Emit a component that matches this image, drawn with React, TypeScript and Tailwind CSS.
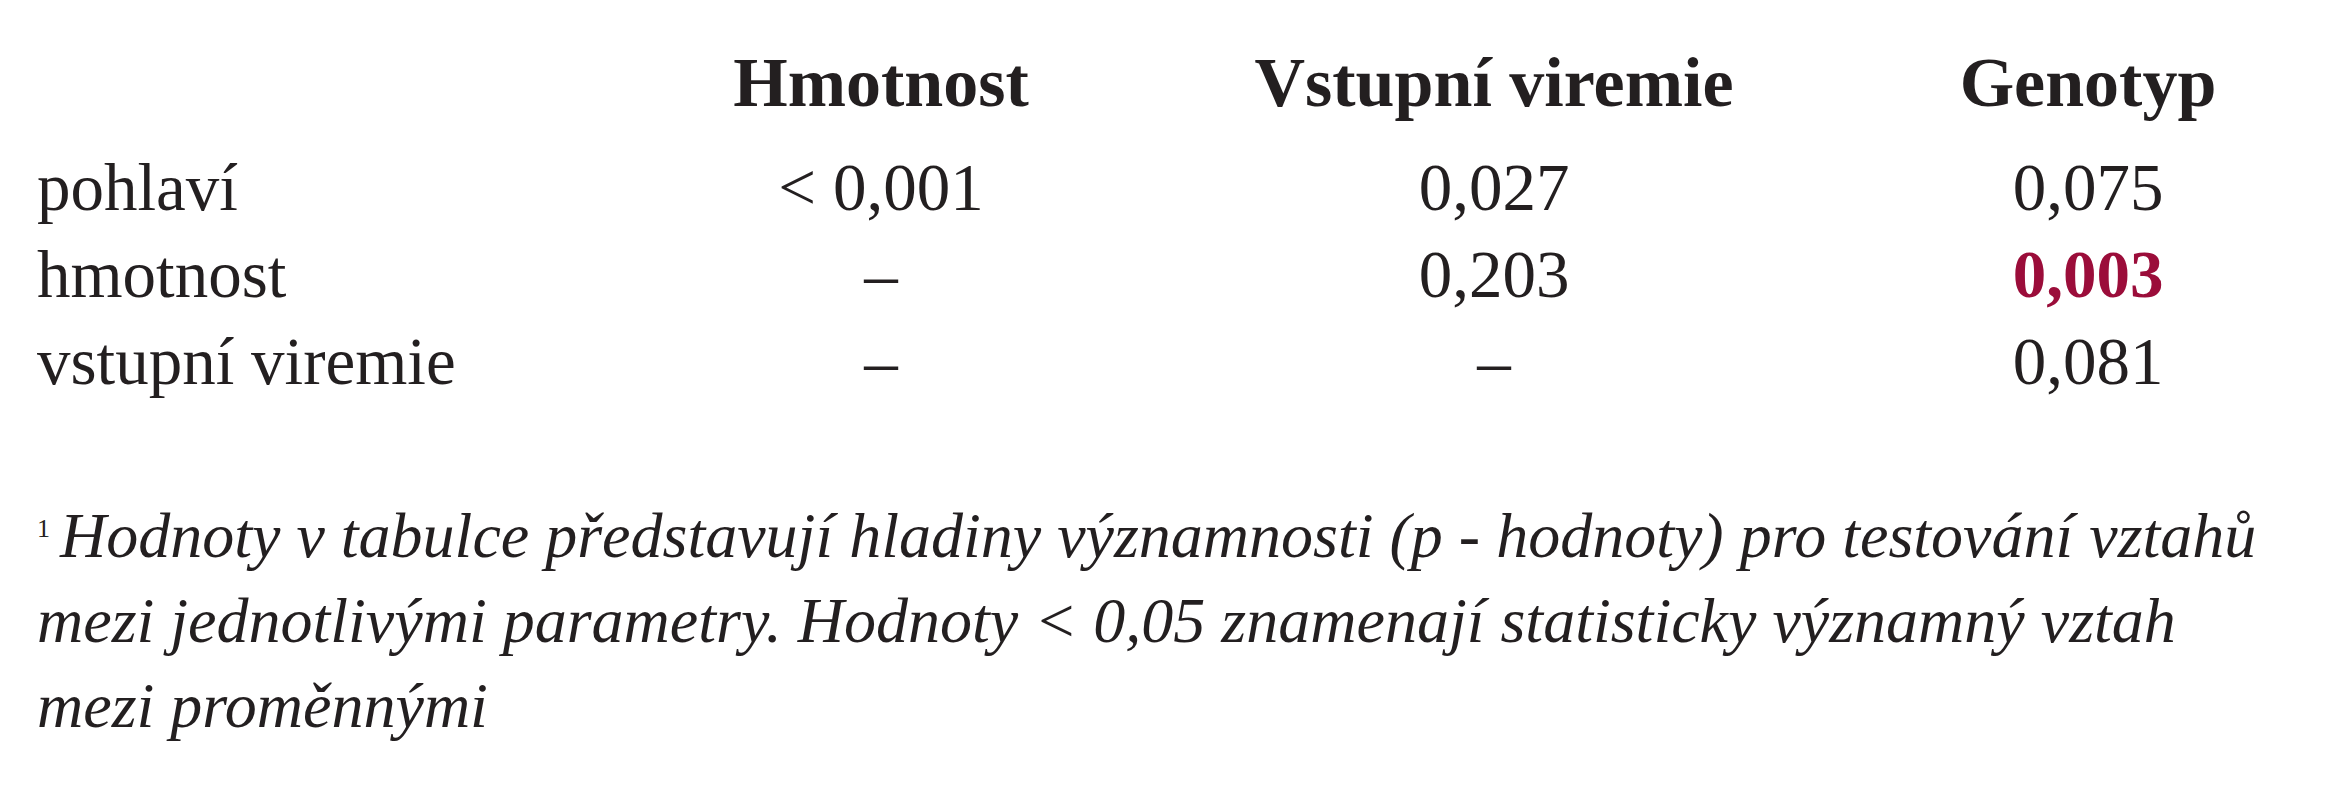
import React from "react";

const rows: { label: string; cells: { text: string; red?: boolean }[] }[] = [
  { label: "pohlaví", cells: [{ text: "< 0,001" }, { text: "0,027" }, { text: "0,075" }] },
  { label: "hmotnost", cells: [{ text: "–" }, { text: "0,203" }, { text: "0,003", red: true }] },
  { label: "vstupní viremie", cells: [{ text: "–" }, { text: "–" }, { text: "0,081" }] },
];

export default function App() {
  return (
    <div className="w-[2325px] h-[800px] bg-white text-[#231f20] pt-[39px] pl-[37px] font-['Liberation_Serif',serif] overflow-hidden">
      <div className="grid grid-cols-[623px_442px_784px_404px] text-[70px] leading-[87px] font-bold">
        <div />
        <div className="text-center">Hmotnost</div>
        <div className="text-center">Vstupní viremie</div>
        <div className="text-center">Genotyp</div>
      </div>
      <div className="mt-[18px] grid grid-cols-[623px_442px_784px_404px] text-[67px] leading-[87px]">
        {rows.map((r) => (
          <React.Fragment key={r.label}>
            <div>{r.label}</div>
            {r.cells.map((c, i) => (
              <div
                key={i}
                className={c.red ? "text-center font-bold text-[#9b0d3a]" : "text-center"}
              >
                {c.text}
              </div>
            ))}
          </React.Fragment>
        ))}
      </div>
      <div className="mt-[88px] text-[64px] leading-[85px] italic w-[2280px]">
        <p>
          <span className="not-italic text-[26px] align-[20px] leading-none mr-[10px]">1</span>
          Hodnoty v tabulce představují hladiny významnosti (p - hodnoty) pro testování vztahů
        </p>
        <p>mezi jednotlivými parametry. Hodnoty &lt; 0,05 znamenají statisticky významný vztah</p>
        <p>mezi proměnnými</p>
      </div>
    </div>
  );
}
